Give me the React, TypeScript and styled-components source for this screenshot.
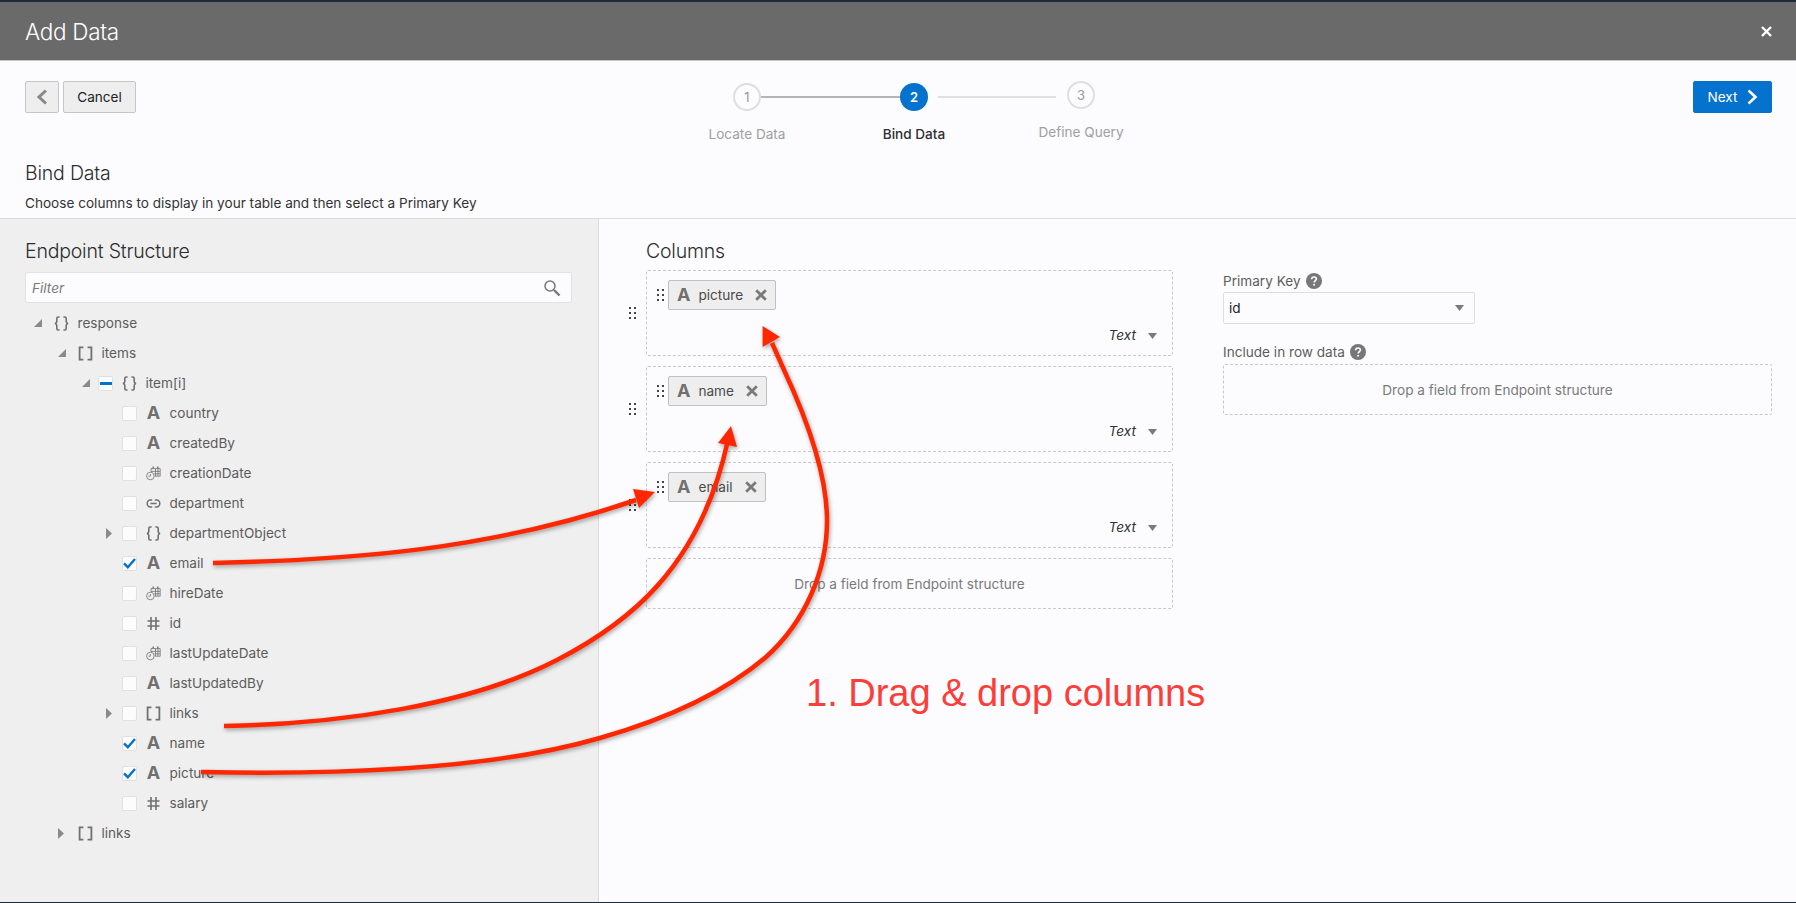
//-----------------------------------------------------------------------------
// Imports
//-----------------------------------------------------------------------------
import React from 'react'
import styled, { createGlobalStyle } from 'styled-components'

//-----------------------------------------------------------------------------
// Data
//-----------------------------------------------------------------------------
type NodeKind = 'text' | 'object' | 'array' | 'date' | 'link' | 'number'
type Twist = 'open' | 'closed' | null
type Check = 'none' | 'off' | 'on' | 'mixed'

interface ITreeNode {
  label: string
  kind: NodeKind
  depth: number
  twist: Twist
  check: Check
}

const treeNodes: ITreeNode[] = [
  { label: 'response', kind: 'object', depth: 0, twist: 'open', check: 'none' },
  { label: 'items', kind: 'array', depth: 1, twist: 'open', check: 'none' },
  { label: 'item[i]', kind: 'object', depth: 2, twist: 'open', check: 'mixed' },
  { label: 'country', kind: 'text', depth: 3, twist: null, check: 'off' },
  { label: 'createdBy', kind: 'text', depth: 3, twist: null, check: 'off' },
  { label: 'creationDate', kind: 'date', depth: 3, twist: null, check: 'off' },
  { label: 'department', kind: 'link', depth: 3, twist: null, check: 'off' },
  { label: 'departmentObject', kind: 'object', depth: 3, twist: 'closed', check: 'off' },
  { label: 'email', kind: 'text', depth: 3, twist: null, check: 'on' },
  { label: 'hireDate', kind: 'date', depth: 3, twist: null, check: 'off' },
  { label: 'id', kind: 'number', depth: 3, twist: null, check: 'off' },
  { label: 'lastUpdateDate', kind: 'date', depth: 3, twist: null, check: 'off' },
  { label: 'lastUpdatedBy', kind: 'text', depth: 3, twist: null, check: 'off' },
  { label: 'links', kind: 'array', depth: 3, twist: 'closed', check: 'off' },
  { label: 'name', kind: 'text', depth: 3, twist: null, check: 'on' },
  { label: 'picture', kind: 'text', depth: 3, twist: null, check: 'on' },
  { label: 'salary', kind: 'number', depth: 3, twist: null, check: 'off' },
  { label: 'links', kind: 'array', depth: 1, twist: 'closed', check: 'none' }
]

const boundColumns = ['picture', 'name', 'email']

//-----------------------------------------------------------------------------
// Icons
//-----------------------------------------------------------------------------
const KindIcon = ({ kind }: { kind: NodeKind }) => {
  if (kind === 'text') return <LetterIcon>A</LetterIcon>
  return (
    <svg width="15" height="15" viewBox="0 0 15 15" fill="none" stroke="#707070">
      {kind === 'object' && (
        <path strokeWidth="1.6" d="M5.6 1H4.2C3.2 1 2.8 1.6 2.8 2.5V5.6C2.8 6.6 2.2 7.2 1 7.5 2.2 7.8 2.8 8.4 2.8 9.4V12.5C2.8 13.4 3.2 14 4.2 14H5.6M9.4 1H10.8C11.8 1 12.2 1.6 12.2 2.5V5.6C12.2 6.6 12.8 7.2 14 7.5 12.8 7.8 12.2 8.4 12.2 9.4V12.5C12.2 13.4 11.8 14 10.8 14H9.4" />
      )}
      {kind === 'array' && (
        <path strokeWidth="1.8" d="M5.4 1.4H1.6V13.6H5.4M9.6 1.4H13.4V13.6H9.6" />
      )}
      {kind === 'number' && (
        <path strokeWidth="1.6" d="M5 1V14M10 1V14M1.5 5H13.5M1.5 10H13.5" />
      )}
      {kind === 'link' && (
        <path strokeWidth="1.5" d="M6.2 4H4.3C2.6 4 1.2 5.6 1.2 7.5S2.6 11 4.3 11H6.2M8.8 4H10.7C12.4 4 13.8 5.6 13.8 7.5S12.4 11 10.7 11H8.8M4.4 7.5H10.6" />
      )}
      {kind === 'date' && (
        <g strokeWidth=".8">
          <path d="M5 5.5V2.6H14.2V10.2H9" />
          <path strokeWidth="1.4" d="M7.2 .4V2.6M11.8 .4V2.6" />
          <path d="M5 5.4H14M8.5 7.8H14M9.5 2.8V10M11.9 2.8V10" />
          <circle cx="4.4" cy="10" r="3.8" />
          <path d="M4.4 8V10.2H2.6" />
        </g>
      )}
    </svg>
  )
}

const Triangle = ({ direction }: { direction: 'open' | 'closed' | 'down' }) => {
  if (direction === 'open') {
    return <svg width="8" height="8" viewBox="0 0 8 8"><path d="M8 0V8H0Z" fill="#8a8a8a" /></svg>
  }
  if (direction === 'closed') {
    return <svg width="6" height="11" viewBox="0 0 6 11"><path d="M0 0L6 5.5 0 11Z" fill="#8a8a8a" /></svg>
  }
  return <svg width="9" height="6" viewBox="0 0 9 6"><path d="M0 0H9L4.5 6Z" fill="#7a7a7a" /></svg>
}

const CheckMark = () => (
  <svg width="13" height="11" viewBox="0 0 13 11" fill="none">
    <path d="M1 5.4L4.8 9.2 12 1" stroke="#0572ce" strokeWidth="2.4" />
  </svg>
)

const Grip = () => (
  <svg width="7" height="12" viewBox="0 0 7 12" fill="#444">
    <rect x="0" y="0" width="2" height="2" /><rect x="5" y="0" width="2" height="2" />
    <rect x="0" y="5" width="2" height="2" /><rect x="5" y="5" width="2" height="2" />
    <rect x="0" y="10" width="2" height="2" /><rect x="5" y="10" width="2" height="2" />
  </svg>
)

const HelpIcon = () => (
  <svg width="16" height="16" viewBox="0 0 16 16">
    <circle cx="8" cy="8" r="8" fill="#777" />
    <path d="M5.6 6.2C5.7 4.8 6.7 4 8 4 9.4 4 10.4 4.9 10.4 6.1 10.4 7.6 8.2 7.8 8.2 9.5" fill="none" stroke="#fff" strokeWidth="1.6" />
    <circle cx="8.1" cy="11.8" r="1" fill="#fff" />
  </svg>
)

//-----------------------------------------------------------------------------
// Component
//-----------------------------------------------------------------------------
const App = () => {
  return (
    <Page>
      <GlobalStyle />
      <TopStrip />
      <Header>
        <HeaderTitle>Add Data</HeaderTitle>
        <svg width="11" height="11" viewBox="0 0 11 11">
          <path d="M1 1L10 10M10 1L1 10" stroke="#fff" strokeWidth="2.4" />
        </svg>
      </Header>

      <Toolbar>
        <BackButton aria-label="Back">
          <svg width="12" height="16" viewBox="0 0 12 16" fill="none">
            <path d="M10 1.5L3 8 10 14.5" stroke="#888" strokeWidth="3" />
          </svg>
        </BackButton>
        <CancelButton>Cancel</CancelButton>
        <Stepper>
          <Step>
            <StepCircle>1</StepCircle>
            <StepLabel>Locate Data</StepLabel>
          </Step>
          <StepLine />
          <Step>
            <StepCircle $active>2</StepCircle>
            <StepLabel $active>Bind Data</StepLabel>
          </Step>
          <StepLine $pending />
          <Step $raised>
            <StepCircle>3</StepCircle>
            <StepLabel>Define Query</StepLabel>
          </Step>
        </Stepper>
        <NextButton>
          Next
          <svg width="12" height="16" viewBox="0 0 12 16" fill="none">
            <path d="M2.5 1.5L9.5 8 2.5 14.5" stroke="#fff" strokeWidth="2.6" />
          </svg>
        </NextButton>
      </Toolbar>

      <SubHeader>
        <Heading>Bind Data</Heading>
        <Description>Choose columns to display in your table and then select a Primary Key</Description>
      </SubHeader>

      <Body>
        <LeftPanel>
          <Heading>Endpoint Structure</Heading>
          <FilterBox>
            <FilterText>Filter</FilterText>
            <svg width="18" height="18" viewBox="0 0 18 18" fill="none" stroke="#777">
              <circle cx="7" cy="7" r="5" strokeWidth="1.5" />
              <path d="M11 11L16.5 16.5" strokeWidth="2.4" />
            </svg>
          </FilterBox>
          <Tree>
            {treeNodes.map((node, i) => (
              <TreeRow key={i} $depth={node.depth}>
                <TwistSlot $wide={node.check === 'none'}>
                  {node.twist && <Triangle direction={node.twist} />}
                </TwistSlot>
                {node.check !== 'none' && (
                  <CheckBox>
                    {node.check === 'on' && <CheckMark />}
                    {node.check === 'mixed' && <MixedMark />}
                  </CheckBox>
                )}
                <IconSlot><KindIcon kind={node.kind} /></IconSlot>
                <TreeLabel>{node.label}</TreeLabel>
              </TreeRow>
            ))}
          </Tree>
        </LeftPanel>

        <RightPanel>
          <ColumnsArea>
            <ColumnsHeading>Columns</ColumnsHeading>
            <ColumnList>
              {boundColumns.map(name => (
                <ColumnRow key={name}>
                  <OuterGrip><Grip /></OuterGrip>
                  <ColumnBox>
                    <ChipRow>
                      <Grip />
                      <Chip>
                        <LetterIcon>A</LetterIcon>
                        <ChipText>{name}</ChipText>
                        <svg width="12" height="12" viewBox="0 0 12 12">
                          <path d="M1.2 1.2L10.8 10.8M10.8 1.2L1.2 10.8" stroke="#7a7a7a" strokeWidth="2.8" />
                        </svg>
                      </Chip>
                    </ChipRow>
                    <TypeRow>
                      <TypeText>Text</TypeText>
                      <Triangle direction="down" />
                    </TypeRow>
                  </ColumnBox>
                </ColumnRow>
              ))}
              <ColumnDrop>Drop a field from Endpoint structure</ColumnDrop>
            </ColumnList>
          </ColumnsArea>

          <SideArea>
            <FieldLabel>Primary Key <HelpIcon /></FieldLabel>
            <SelectBox>
              <SelectValue>id</SelectValue>
              <Triangle direction="down" />
            </SelectBox>
            <FieldLabel $spaced>Include in row data <HelpIcon /></FieldLabel>
            <SideDrop>Drop a field from Endpoint structure</SideDrop>
          </SideArea>
        </RightPanel>
      </Body>
      <BottomLine />

      <ArrowLayer viewBox="0 0 1796 903" width="1796" height="903">
        <g fill="none" stroke="#ff2600" strokeWidth="4.5">
          <path d="M213 563C350 560 490 550 636 500" />
          <path d="M224 726C340 724 470 705 557 660 625 625 700 570 728 440" />
          <path d="M201 772C340 775 490 770 600 738 670 718 725 692 766 657 805 622 828 570 827 517 826 470 805 415 784 370L772 343" />
        </g>
        <g fill="#ff2600">
          <path d="M655 492L633 489 639 508Z" />
          <path d="M731 426L718 443 737 447Z" />
          <path d="M762.6 326L762.6 347 780 337Z" />
        </g>
      </ArrowLayer>
      <Caption>1. Drag &amp; drop columns</Caption>
    </Page>
  )
}

//-----------------------------------------------------------------------------
// Styled Components
//-----------------------------------------------------------------------------
const GlobalStyle = createGlobalStyle`
  html, body {
    margin: 0;
    padding: 0;
    background: #fcfcfe;
  }
  * {
    box-sizing: border-box;
  }
`

const Page = styled.div`
  position: relative;
  width: 1796px;
  height: 903px;
  overflow: hidden;
  display: flex;
  flex-direction: column;
  background: #fcfcfe;
  color: #5c5c5c;
  font-family: Inter, "Liberation Sans", sans-serif;
  font-size: 13.6px;
`

const TopStrip = styled.div`
  height: 2px;
  background: #1b2b3a;
`

const Header = styled.div`
  height: 59px;
  padding: 0 24px 0 25px;
  display: flex;
  justify-content: space-between;
  align-items: center;
  background: #6a6a6a;
  border-bottom: 1px solid #c8c8c8;
`

const HeaderTitle = styled.div`
  color: #fff;
  font-size: 22.5px;
  font-weight: 300;
  line-height: 28px;
  padding-top: 1px;
  letter-spacing: -0.3px;
`

const Toolbar = styled.div`
  height: 91px;
  padding: 20px 24px 0 25px;
  display: flex;
  align-items: flex-start;
`

const ToolButton = styled.button`
  height: 32px;
  border: 1px solid #c6c6c6;
  border-radius: 2px;
  background: #eeeeee;
  font: inherit;
  color: #222;
  display: flex;
  align-items: center;
  justify-content: center;
`

const BackButton = styled(ToolButton)`
  width: 34px;
  padding: 0;
`

const CancelButton = styled(ToolButton)`
  width: 73px;
  margin-left: 4px;
  padding: 0;
`

const NextButton = styled(ToolButton)`
  width: 79px;
  margin-left: auto;
  gap: 8px;
  padding: 0;
  border-color: #0572ce;
  background: #0572ce;
  color: #fff;
`

const Stepper = styled.div`
  margin: 2px 0 0 597px;
  display: flex;
  align-items: flex-start;
`

const Step = styled.div<{ $raised?: boolean }>`
  width: 28px;
  margin-top: ${({ $raised }) => ($raised ? '-2px' : '0')};
  display: flex;
  flex-direction: column;
  align-items: center;
`

const StepCircle = styled.div<{ $active?: boolean }>`
  width: 28px;
  height: 28px;
  border-radius: 50%;
  display: flex;
  align-items: center;
  justify-content: center;
  font-size: 13px;
  font-weight: ${({ $active }) => ($active ? 600 : 400)};
  color: ${({ $active }) => ($active ? '#fff' : '#9a9a9a')};
  background: ${({ $active }) => ($active ? '#0572ce' : '#fcfcfe')};
  border: ${({ $active }) => ($active ? 'none' : '2px solid #dedede')};
`

const StepLabel = styled.div<{ $active?: boolean }>`
  margin-top: 15px;
  line-height: 17px;
  white-space: nowrap;
  font-weight: ${({ $active }) => ($active ? 500 : 400)};
  color: ${({ $active }) => ($active ? '#2e2e2e' : '#a0a0a0')};
`

const StepLine = styled.div<{ $pending?: boolean }>`
  width: ${({ $pending }) => ($pending ? '118px' : '139px')};
  height: 2px;
  margin: 13px ${({ $pending }) => ($pending ? '11px' : '0')} 0 ${({ $pending }) => ($pending ? '10px' : '0')};
  background: ${({ $pending }) => ($pending ? '#e0e0e0' : '#b4b4b4')};
`

const SubHeader = styled.div`
  height: 67px;
  padding: 9px 25px 0;
  border-bottom: 1px solid #dcdcdc;
`

const Heading = styled.div`
  height: 24px;
  line-height: 25px;
  font-size: 19.5px;
  font-weight: 300;
  letter-spacing: -0.2px;
  color: #2c2c2c;
`

const ColumnsHeading = styled(Heading)`
  margin-left: 17px;
`

const Description = styled.div`
  margin-top: 9px;
  line-height: 18px;
  color: #333;
`

const Body = styled.div`
  flex: 1;
  min-height: 0;
  display: flex;
`

const LeftPanel = styled.div`
  width: 599px;
  padding: 20px 26px 0 25px;
  background: #efefef;
  border-right: 1px solid #dcdcdc;
`

const FilterBox = styled.div`
  height: 31px;
  margin-top: 9px;
  padding: 0 10px 0 6px;
  display: flex;
  align-items: center;
  justify-content: space-between;
  background: #fcfcfe;
  border: 1px solid #e2e2e2;
  border-radius: 2px;
`

const FilterText = styled.span`
  font-style: italic;
  color: #7a7a7a;
`

const Tree = styled.div`
  margin: 5px 0 0 -25px;
`

const TreeRow = styled.div<{ $depth: number }>`
  height: 30px;
  padding-left: ${({ $depth }) => 34 + $depth * 24}px;
  display: flex;
  align-items: center;
`

const TwistSlot = styled.div<{ $wide: boolean }>`
  width: ${({ $wide }) => ($wide ? '20px' : '16px')};
  flex: none;
  display: flex;
  align-items: center;
`

const CheckBox = styled.div`
  width: 15px;
  height: 15px;
  margin-right: 9px;
  flex: none;
  display: flex;
  align-items: center;
  justify-content: center;
  background: #fcfcfe;
  border: 1px solid #e0e0e0;
  border-radius: 2px;
`

const MixedMark = styled.div`
  width: 12px;
  height: 3px;
  background: #0572ce;
`

const IconSlot = styled.div`
  width: 15px;
  margin-right: 8.5px;
  flex: none;
  display: flex;
  align-items: center;
  justify-content: center;
`

const LetterIcon = styled.span`
  font-size: 18px;
  line-height: 18px;
  font-weight: 700;
  color: #707070;
`

const TreeLabel = styled.span`
  color: #5c5c5c;
`

const RightPanel = styled.div`
  flex: 1;
  padding: 20px 24px 0 30px;
  display: flex;
`

const ColumnsArea = styled.div`
  width: 544px;
`

const ColumnList = styled.div`
  margin-top: 7px;
  display: flex;
  flex-direction: column;
  gap: 10px;
`

const ColumnRow = styled.div`
  display: flex;
  align-items: center;
`

const OuterGrip = styled.div`
  width: 17px;
  flex: none;
  display: flex;
`

const ColumnBox = styled.div`
  flex: 1;
  height: 86px;
  padding: 9px 15px 11px 10px;
  display: flex;
  flex-direction: column;
  justify-content: space-between;
  border: 1px dashed #c8c8c8;
  border-radius: 2px;
`

const ChipRow = styled.div`
  display: flex;
  align-items: center;
  gap: 4px;
`

const Chip = styled.div`
  height: 30px;
  padding: 0 8px;
  display: flex;
  align-items: center;
  background: #eeeeee;
  border: 1px solid #c0c0c0;
  border-radius: 2px;
`

const ChipText = styled.span`
  margin: 0 12px 0 8px;
  color: #4a4a4a;
`

const TypeRow = styled.div`
  display: flex;
  justify-content: flex-end;
  align-items: center;
  gap: 12px;
`

const TypeText = styled.span`
  line-height: 17px;
  font-style: italic;
  color: #333;
`

const DropZone = styled.div`
  display: flex;
  align-items: center;
  justify-content: center;
  border: 1px dashed #c8c8c8;
  border-radius: 2px;
  color: #7a7a7a;
`

const ColumnDrop = styled(DropZone)`
  height: 51px;
  margin-left: 17px;
`

const SideArea = styled.div`
  flex: 1;
  margin-left: 50px;
  padding-top: 33px;
`

const FieldLabel = styled.div<{ $spaced?: boolean }>`
  height: 17px;
  margin-top: ${({ $spaced }) => ($spaced ? '19px' : '0')};
  display: flex;
  align-items: center;
  gap: 5px;
  color: #5c5c5c;
`

const SelectBox = styled.div`
  width: 252px;
  height: 32px;
  margin-top: 3px;
  padding: 0 10px 0 5px;
  display: flex;
  align-items: center;
  justify-content: space-between;
  border: 1px solid #dedede;
  border-radius: 2px;
`

const SelectValue = styled.span`
  color: #222;
`

const SideDrop = styled(DropZone)`
  height: 51px;
  margin-top: 4px;
`

const BottomLine = styled.div`
  height: 1px;
  background: #1b2b3a;
`

const ArrowLayer = styled.svg`
  position: absolute;
  top: 0;
  left: 0;
  pointer-events: none;
  filter: drop-shadow(1px 2px 2px rgba(0, 0, 0, 0.35));
`

const Caption = styled.div`
  position: absolute;
  left: 806px;
  top: 671px;
  font-family: "Liberation Sans", Arial, sans-serif;
  font-size: 38px;
  line-height: 44px;
  white-space: nowrap;
  color: #fc3d39;
`

export default App
